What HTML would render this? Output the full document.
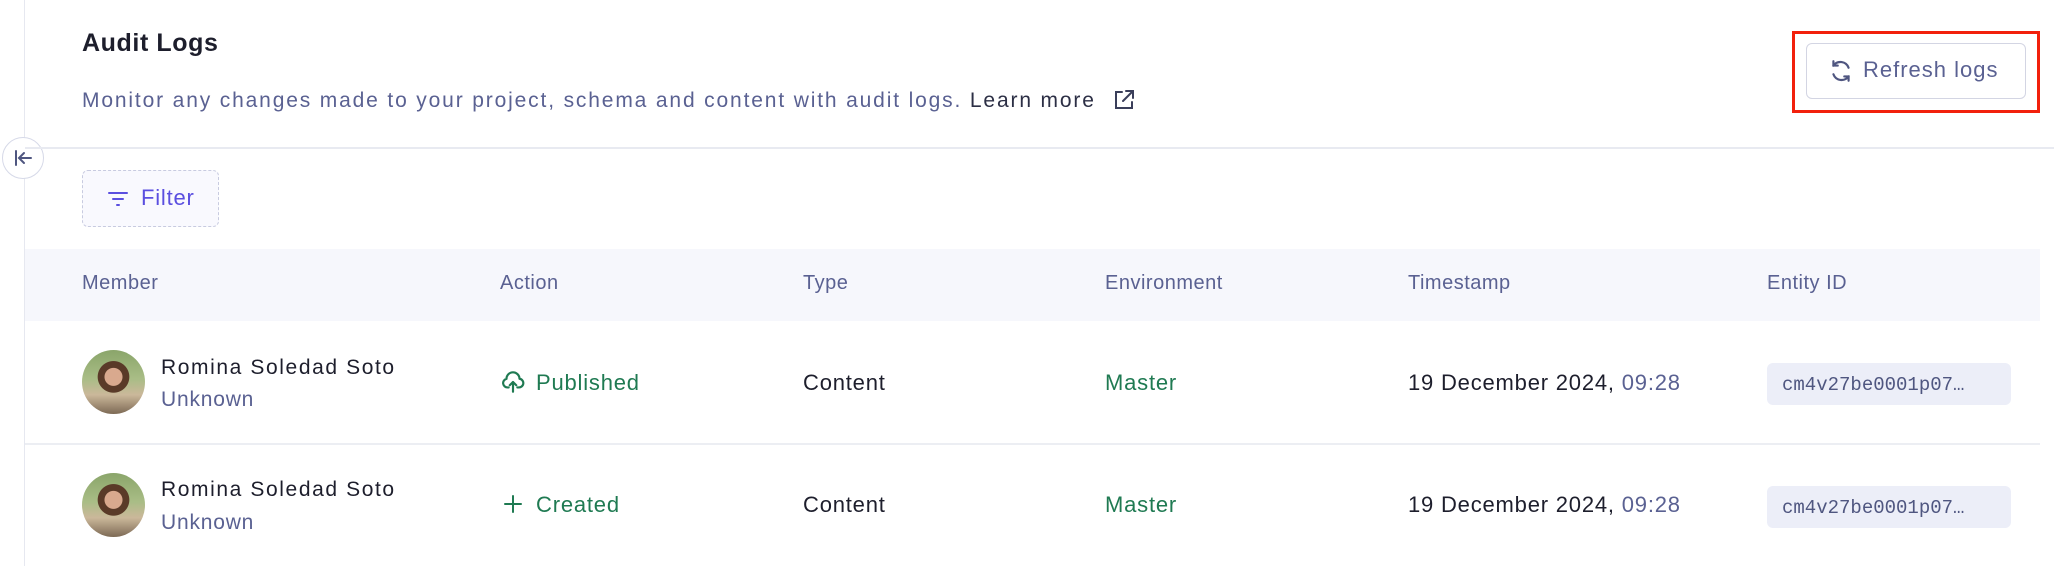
<!DOCTYPE html>
<html><head><meta charset="utf-8"><style>
*{margin:0;padding:0;box-sizing:border-box}
body{width:2054px;height:566px;background:#fff;font-family:"Liberation Sans",sans-serif;position:relative;overflow:hidden;color:#1d1e2c}
.a{position:absolute;white-space:nowrap}
.muted{color:#5a6192}
.green{color:#1f7a52}
.hd{font-size:20px;color:#5a6192;top:272px;letter-spacing:0.5px}
.cell{font-size:22px;letter-spacing:0.8px}
.nm{letter-spacing:1.6px!important}
.av{position:absolute;width:63px;height:64px;border-radius:50%;left:82px;background:radial-gradient(circle at 50% 42%,#d9a98e 0 18%,#5a3a28 19% 32%,transparent 33%),linear-gradient(180deg,#8aa56a 0%,#a9bd86 45%,#cbb89a 70%,#7d6a55 100%)}
.pill{position:absolute;left:1767px;width:244px;height:42px;background:#eceef8;border-radius:6px;font-family:"Liberation Mono",monospace;font-size:19px;color:#4f5680;padding:11px 0 0 15px}
</style></head><body>
<div class="a" style="left:24px;top:0;width:1px;height:566px;background:#e6e8f0"></div>
<div class="a" style="left:2px;top:137px;width:42px;height:42px;border-radius:50%;border:1px solid #d6d9e8;background:#fff"></div>
<svg class="a" style="left:12px;top:147px" width="22" height="22" viewBox="0 0 22 22" fill="none" stroke="#4f5680" stroke-width="2" stroke-linecap="round"><path d="M4 4v14M19 11H8M12 6l-5 5 5 5"/></svg>

<div class="a" style="left:82px;top:29px;font-size:25px;font-weight:700;color:#1d1e2c;letter-spacing:0.6px">Audit Logs</div>
<div class="a muted" style="left:82px;top:89px;font-size:21px;letter-spacing:1.85px">Monitor any changes made to your project, schema and content with audit logs. <span style="color:#2c2f45">Learn more</span></div>
<svg class="a" style="left:1112px;top:88px" width="24" height="24" viewBox="0 0 24 24" fill="none" stroke="#3a3e5a" stroke-width="2" stroke-linecap="round"><path d="M10 4H4v16h16v-6M14 3h7v7M21 3l-10 10"/></svg>

<div class="a" style="left:1792px;top:31px;width:248px;height:82px;border:3px solid #f2200c"></div>
<div class="a" style="left:1806px;top:43px;width:220px;height:56px;border:1px solid #d3d5e3;border-radius:6px;background:#fff"></div>
<svg class="a" style="left:1828px;top:58px" width="26" height="26" viewBox="0 0 24 24" fill="none" stroke="#4f5680" stroke-width="2" stroke-linecap="round"><path d="M19 9a8 8 0 0 0-14-2M5 15a8 8 0 0 0 14 2"/><path d="M5 3v4h4M19 21v-4h-4"/></svg>
<div class="a muted" style="left:1863px;top:57px;font-size:22px;letter-spacing:1px">Refresh logs</div>

<div class="a" style="left:25px;top:147px;width:2029px;height:2px;background:#e8eaf1"></div>
<div class="a" style="left:82px;top:170px;width:137px;height:57px;border:1px dashed #c8cbe0;border-radius:6px;background:#f9f9fe"></div>
<svg class="a" style="left:106px;top:187px" width="24" height="24" viewBox="0 0 24 24" fill="none" stroke="#5b4fe0" stroke-width="2" stroke-linecap="round"><path d="M3 6h18M7 12h10M11 18h2"/></svg>
<div class="a" style="left:141px;top:185px;font-size:22px;color:#5b4fe0;letter-spacing:0.8px">Filter</div>

<div class="a" style="left:25px;top:249px;width:2015px;height:72px;background:#f6f7fc"></div>
<div class="a hd" style="left:82px">Member</div>
<div class="a hd" style="left:500px">Action</div>
<div class="a hd" style="left:803px">Type</div>
<div class="a hd" style="left:1105px">Environment</div>
<div class="a hd" style="left:1408px">Timestamp</div>
<div class="a hd" style="left:1767px">Entity ID</div>

<div class="av" style="top:350px"></div>
<div class="a cell nm" style="left:161px;top:356px;font-size:21px">Romina Soledad Soto</div>
<div class="a muted cell" style="left:161px;top:388px;font-size:21px">Unknown</div>
<svg class="a" style="left:500px;top:369px" width="26" height="26" viewBox="0 0 24 24" fill="none" stroke="#1f7a52" stroke-width="2" stroke-linecap="round" stroke-linejoin="round"><path d="M8 17H7a4 4 0 0 1-1-7.9A6 6 0 0 1 18 9a4 4 0 0 1-1 8h-1"/><path d="M12 21v-9M9 15l3-3 3 3"/></svg>
<div class="a cell green" style="left:536px;top:370px">Published</div>
<div class="a cell" style="left:803px;top:370px">Content</div>
<div class="a cell green" style="left:1105px;top:370px">Master</div>
<div class="a cell" style="left:1408px;top:370px">19 December 2024, <span class="muted">09:28</span></div>
<div class="pill" style="top:363px">cm4v27be0001p07…</div>

<div class="a" style="left:25px;top:443px;width:2015px;height:2px;background:#eceef3"></div>

<div class="av" style="top:473px"></div>
<div class="a cell nm" style="left:161px;top:478px;font-size:21px">Romina Soledad Soto</div>
<div class="a muted cell" style="left:161px;top:511px;font-size:21px">Unknown</div>
<svg class="a" style="left:502px;top:493px" width="22" height="22" viewBox="0 0 22 22" fill="none" stroke="#1f7a52" stroke-width="2" stroke-linecap="round"><path d="M11 3v16M3 11h16"/></svg>
<div class="a cell green" style="left:536px;top:492px">Created</div>
<div class="a cell" style="left:803px;top:492px">Content</div>
<div class="a cell green" style="left:1105px;top:492px">Master</div>
<div class="a cell" style="left:1408px;top:492px">19 December 2024, <span class="muted">09:28</span></div>
<div class="pill" style="top:486px">cm4v27be0001p07…</div>
</body></html>
